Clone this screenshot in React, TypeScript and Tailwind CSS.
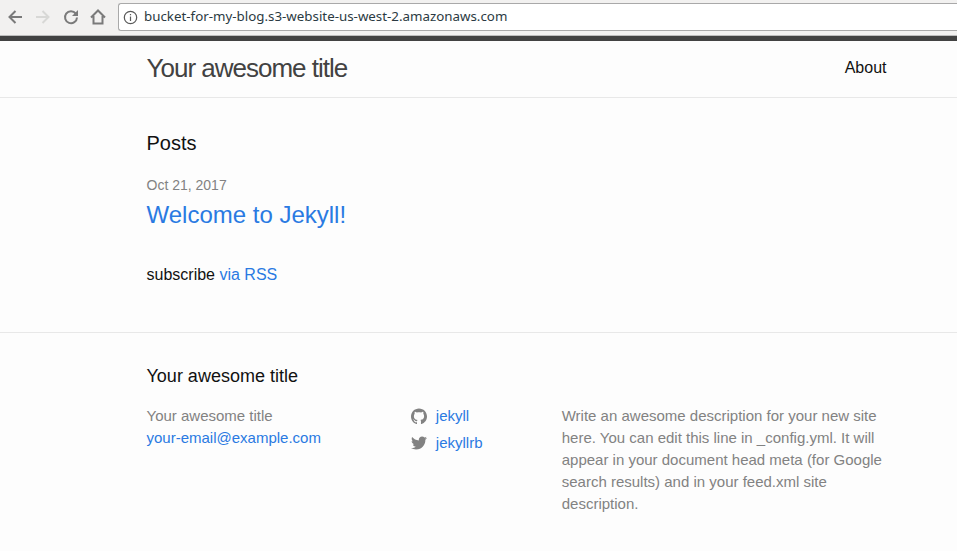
const GithubIcon = () => (
  <svg viewBox="0 0 16 16" className="w-4 h-4 fill-[#828282]">
    <path d="M7.999 0.431C3.582 0.431 0 4.013 0 8.431c0 3.534 2.292 6.532 5.47 7.59 0.4 0.074 0.546-0.173 0.546-0.385 0-0.19-0.007-0.693-0.011-1.36-2.225 0.483-2.695-1.073-2.695-1.073-0.364-0.924-0.889-1.17-0.889-1.17-0.726-0.496 0.055-0.486 0.055-0.486 0.803 0.056 1.225 0.824 1.225 0.824 0.714 1.223 1.873 0.87 2.329 0.665 0.073-0.517 0.279-0.87 0.508-1.07-1.776-0.202-3.644-0.888-3.644-3.953 0-0.873 0.312-1.587 0.824-2.147-0.083-0.202-0.357-1.016 0.078-2.117 0 0 0.672-0.215 2.2 0.82 0.638-0.177 1.323-0.266 2.003-0.269 0.68 0.003 1.364 0.092 2.003 0.269 1.527-1.035 2.198-0.82 2.198-0.82 0.437 1.101 0.162 1.915 0.08 2.117 0.513 0.56 0.822 1.274 0.822 2.147 0 3.073-1.871 3.749-3.653 3.947 0.287 0.248 0.543 0.735 0.543 1.481 0 1.069-0.01 1.932-0.01 2.195 0 0.214 0.144 0.463 0.55 0.385C13.71 14.96 16 11.963 16 8.431 16 4.013 12.418 0.431 7.999 0.431z" />
  </svg>
);

const TwitterIcon = () => (
  <svg viewBox="0 0 16 16" className="w-4 h-4 fill-[#828282]">
    <path d="M15.969 3.058c-0.586 0.26-1.217 0.436-1.878 0.515 0.675-0.405 1.194-1.045 1.438-1.809-0.632 0.375-1.332 0.647-2.076 0.793-0.596-0.636-1.446-1.033-2.387-1.033-1.806 0-3.27 1.464-3.27 3.27 0 0.256 0.029 0.506 0.085 0.745C5.163 5.404 2.753 4.102 1.14 2.124 0.859 2.607 0.698 3.168 0.698 3.767c0 1.134 0.577 2.135 1.455 2.722-0.536-0.017-1.04-0.164-1.482-0.409 0 0.014 0 0.027 0 0.041 0 1.584 1.127 2.906 2.623 3.206-0.274 0.075-0.563 0.115-0.861 0.115-0.211 0-0.416-0.021-0.615-0.059 0.416 1.299 1.624 2.245 3.055 2.271-1.119 0.877-2.529 1.4-4.061 1.4-0.264 0-0.524-0.015-0.78-0.046 1.447 0.928 3.166 1.469 5.013 1.469 6.015 0 9.304-4.983 9.304-9.304 0-0.142-0.003-0.283-0.009-0.423 0.639-0.461 1.193-1.037 1.631-1.693z" />
  </svg>
);

const BrowserBar = () => (
  <div className="h-9 bg-[#f2f1f0] flex items-start pt-[3px] border-b border-[#bdbdbd] shrink-0">
    <div className="w-[118px] h-[28px] flex items-center pl-[7px] shrink-0">
      <svg viewBox="0 0 16 16" className="w-4 h-4 fill-none stroke-[#7a7a7a] stroke-2">
        <path d="M15 8H2.5M8.5 2 2.5 8l6 6" />
      </svg>
      <svg viewBox="0 0 16 16" className="w-4 h-4 ml-[12px] fill-none stroke-[#d8d8d6] stroke-2">
        <path d="M1 8h12.5M7.5 2l6 6-6 6" />
      </svg>
      <svg viewBox="0 0 16 16" className="w-4 h-4 ml-[12px] fill-none stroke-[#7a7a7a] stroke-2">
        <path d="M12.8 4.6A6 6 0 1 0 14 8.5" />
        <path d="M15 1v6H9z" className="fill-[#7a7a7a] stroke-none" />
      </svg>
      <svg viewBox="0 0 16 16" className="w-4 h-4 ml-[11px] fill-none stroke-[#7a7a7a] stroke-2">
        <path d="M1 8.5 8 1.5l7 7M3.5 7v7.5h9V7" />
      </svg>
    </div>
    <div className="flex-1 h-[28px] bg-white border border-[#a9a9a9] border-r-0 rounded-l-[3px] flex items-center pl-[4px]">
      <svg viewBox="0 0 16 16" className="w-[15px] h-[15px] fill-none stroke-[#5a5a5a] stroke-[1.3]">
        <circle cx="8" cy="8" r="6.6" />
        <path d="M8 7v4.6M8 4.2v1.5" />
      </svg>
      <span className="ml-[6px] text-[13.33px] text-[#2b3a42] font-['Noto_Sans',sans-serif]">
        bucket-for-my-blog.s3-website-us-west-2.amazonaws.com
      </span>
    </div>
  </div>
);

const App = () => {
  return (
    <div className="w-[957px] h-[551px] overflow-hidden flex flex-col bg-[#fdfdfd] text-[#111] text-base font-['Liberation_Sans',sans-serif]">
      <BrowserBar />

      <header className="border-t-[5px] border-t-[#424242] border-b border-b-[#e8e8e8] h-[62px] shrink-0">
        <div className="ml-[146.5px] w-[740px] flex justify-between">
          <a className="text-[26px] leading-[54px] tracking-[-1px] text-[#424242]">Your awesome title</a>
          <a className="leading-[54px]">About</a>
        </div>
      </header>

      <main className="h-[235px] shrink-0 border-b border-[#e8e8e8] pt-[30px]">
        <div className="ml-[146.5px] w-[740px]">
          <h2 className="text-[20px] leading-[30px]">Posts</h2>
          <div className="mt-[17px]">
            <div className="text-sm leading-[21px] text-[#828282]">Oct 21, 2017</div>
            <a className="block text-2xl leading-[38px] text-[#2a7ae2]">Welcome to Jekyll!</a>
          </div>
          <p className="mt-[29px] leading-[24px]">
            subscribe <a className="text-[#2a7ae2]">via RSS</a>
          </p>
        </div>
      </main>

      <footer className="pt-[30px]">
        <div className="ml-[146.5px] w-[740px]">
          <h2 className="text-lg leading-[27px]">Your awesome title</h2>
          <div className="flex mt-[15px] text-[15px] leading-[22px]">
            <div className="w-[264.5px] text-[#828282]">
              <div>Your awesome title</div>
              <a className="block text-[#2a7ae2]">your-email@example.com</a>
            </div>
            <div className="w-[151px] text-[#2a7ae2]">
              <a className="flex items-center gap-[9px] h-[22px]">
                <GithubIcon />
                jekyll
              </a>
              <a className="flex items-center gap-[9px] mt-[5px] h-[22px]">
                <TwitterIcon />
                jekyllrb
              </a>
            </div>
            <p className="w-[325px] text-[#828282]">
              Write an awesome description for your new site here. You can edit this line in _config.yml. It will appear in your document head meta (for Google search results) and in your feed.xml site description.
            </p>
          </div>
        </div>
      </footer>
    </div>
  );
};

export default App;
